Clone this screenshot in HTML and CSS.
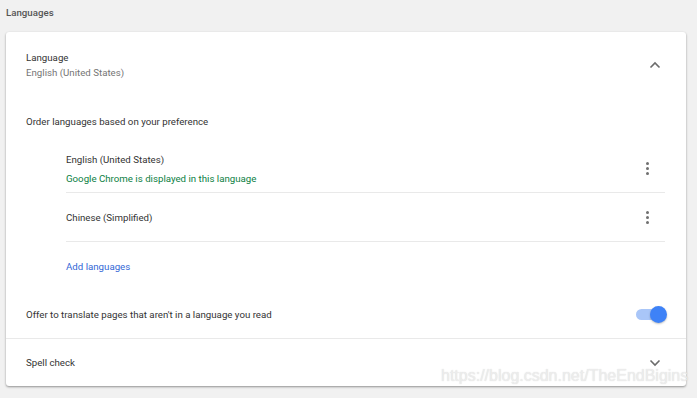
FILE: index.html
```html
<!DOCTYPE html>
<html lang="en">
<head>
    <meta charset="UTF-8">
    <title>Languages</title>
    <link rel="stylesheet" href="styles.css">
</head>
<body>

    <h2 class="section-title">Languages</h2>

    <div class="card">
        <div class="row header-row">
            <div class="row-text">
                <div class="label">Language</div>
                <div class="sub">English (United States)</div>
            </div>
            <svg class="chevron" width="12" height="8" viewBox="0 0 12 8">
                <path d="M1.5 6.5 L6 2 L10.5 6.5" fill="none" stroke="#6b6b6b" stroke-width="1.6"/>
            </svg>
        </div>

        <div class="row plain-row">
            <div class="label">Order languages based on your preference</div>
        </div>

        <div class="lang-list">
            <div class="lang-item first">
                <div class="row-text">
                    <div class="label">English (United States)</div>
                    <div class="note">Google Chrome is displayed in this language</div>
                </div>
                <span class="more"><i></i><i></i><i></i></span>
            </div>
            <div class="lang-item">
                <div class="label">Chinese (Simplified)</div>
                <span class="more"><i></i><i></i><i></i></span>
            </div>
            <div class="add-row">
                <a class="link">Add languages</a>
            </div>
        </div>

        <div class="row toggle-row">
            <div class="label">Offer to translate pages that aren't in a language you read</div>
            <span class="toggle"><span class="knob"></span></span>
        </div>

        <div class="row spell-row">
            <div class="label">Spell check</div>
            <svg class="chevron" width="12" height="8" viewBox="0 0 12 8">
                <path d="M1.5 1.5 L6 6 L10.5 1.5" fill="none" stroke="#6b6b6b" stroke-width="1.6"/>
            </svg>
        </div>
    </div>

    <div class="watermark">https://blog.csdn.net/TheEndBigins</div>

</body>
</html>
```

FILE: styles.css
```css
body {
    font-family: Roboto, 'Noto Sans', sans-serif;
    font-size: 9.7px;
    color: #333;
    background-color: #f1f1f1;
    margin: 0;
    padding: 0;
    width: 697px;
    height: 398px;
    position: relative;
    overflow: hidden;
}

.section-title {
    font-size: 9.7px;
    font-weight: 500;
    color: #555;
    margin: 0;
    padding: 6px 0 0 6px;
    height: 32px;
    line-height: 14px;
    box-sizing: border-box;
}

.card {
    margin-left: 6px;
    width: 680px;
    height: 354px;
    background-color: #ffffff;
    border-radius: 3px;
    box-shadow: 0 1px 2px rgba(0, 0, 0, 0.3), 0 1px 3px rgba(0, 0, 0, 0.12);
}

.row {
    display: flex;
    align-items: center;
    justify-content: space-between;
    padding: 0 25px 0 20px;
}

.label {
    line-height: 15px;
    color: #333;
}

.sub {
    line-height: 15px;
    color: #757575;
}

.header-row {
    height: 65px;
}

.plain-row {
    height: 48px;
}

.chevron {
    display: block;
}

.lang-list {
    margin: 0 21px 0 60px;
}

.lang-item {
    display: flex;
    align-items: center;
    justify-content: space-between;
    height: 48px;
    border-bottom: 1px solid #e9e9e9;
    padding-right: 16px;
}

.lang-item.first {
    height: 47px;
}

.note {
    line-height: 15px;
    margin-top: 4px;
    color: #0b8043;
}

.more {
    display: flex;
    flex-direction: column;
    gap: 2px;
}

.more i {
    display: block;
    width: 3px;
    height: 3px;
    border-radius: 50%;
    background-color: #707070;
}

.add-row {
    height: 48px;
    display: flex;
    align-items: center;
}

.link {
    color: #3367d6;
    line-height: 15px;
}

.toggle-row {
    height: 48px;
    border-bottom: 1px solid #e9e9e9;
    padding-right: 20px;
}

.toggle {
    position: relative;
    display: block;
    width: 28px;
    height: 11px;
    border-radius: 6px;
    background-color: #a9c6f8;
    margin-right: 2px;
}

.knob {
    position: absolute;
    right: -3px;
    top: -3px;
    width: 17px;
    height: 17px;
    border-radius: 50%;
    background-color: #3e82f7;
    box-shadow: 0 1px 2px rgba(0, 0, 0, 0.25);
}

.spell-row {
    height: 47px;
}

.watermark {
    position: absolute;
    left: 441px;
    top: 367px;
    font-family: 'Liberation Sans', Arial, sans-serif;
    font-size: 16px;
    color: rgba(240, 240, 240, 0.85);
    text-shadow: 0 0 1px rgba(160, 160, 160, 0.45);
    white-space: nowrap;
}
```
